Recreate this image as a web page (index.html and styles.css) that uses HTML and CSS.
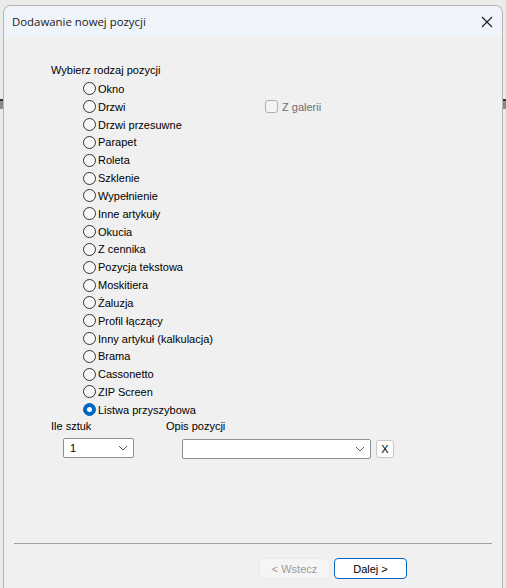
FILE: index.html
```html
<!DOCTYPE html>
<html>
<head>
    <title>Dodawanie nowej pozycji</title>
    <link rel="stylesheet" href="styles.css">
</head>
<body>
    <div class="behind behind-left"></div>
    <div class="behind behind-right"></div>
    <div class="window">
        <div class="titlebar">
            <span class="title">Dodawanie nowej pozycji</span>
            <svg class="close" width="12" height="12" viewBox="0 0 12 12">
                <path d="M1 1 L11 11 M11 1 L1 11" stroke="#1a1a1a" stroke-width="1.1" fill="none"/>
            </svg>
        </div>
        <div class="content">
            <div class="group-label">Wybierz rodzaj pozycji</div>
            <div class="options">
                <label class="row"><span class="opt"><span class="radio"></span>Okno</span></label>
                <label class="row"><span class="opt"><span class="radio"></span>Drzwi</span>
                    <span class="check-wrap"><span class="check"></span>Z galerii</span></label>
                <label class="row"><span class="opt"><span class="radio"></span>Drzwi przesuwne</span></label>
                <label class="row"><span class="opt"><span class="radio"></span>Parapet</span></label>
                <label class="row"><span class="opt"><span class="radio"></span>Roleta</span></label>
                <label class="row"><span class="opt"><span class="radio"></span>Szklenie</span></label>
                <label class="row"><span class="opt"><span class="radio"></span>Wypełnienie</span></label>
                <label class="row"><span class="opt"><span class="radio"></span>Inne artykuły</span></label>
                <label class="row"><span class="opt"><span class="radio"></span>Okucia</span></label>
                <label class="row"><span class="opt"><span class="radio"></span>Z cennika</span></label>
                <label class="row"><span class="opt"><span class="radio"></span>Pozycja tekstowa</span></label>
                <label class="row"><span class="opt"><span class="radio"></span>Moskitiera</span></label>
                <label class="row"><span class="opt"><span class="radio"></span>Żaluzja</span></label>
                <label class="row"><span class="opt"><span class="radio"></span>Profil łączący</span></label>
                <label class="row"><span class="opt"><span class="radio"></span>Inny artykuł (kalkulacja)</span></label>
                <label class="row"><span class="opt"><span class="radio"></span>Brama</span></label>
                <label class="row"><span class="opt"><span class="radio"></span>Cassonetto</span></label>
                <label class="row"><span class="opt"><span class="radio"></span>ZIP Screen</span></label>
                <label class="row"><span class="opt"><span class="radio checked"></span>Listwa przyszybowa</span></label>
            </div>
            <div class="fields">
                <div class="field qty">
                    <div class="field-label">Ile sztuk</div>
                    <div class="combo combo-qty">
                        <span>1</span>
                        <svg width="10" height="6" viewBox="0 0 10 6"><path d="M1 1 L5 5 L9 1" stroke="#555" fill="none"/></svg>
                    </div>
                </div>
                <div class="field desc">
                    <div class="field-label">Opis pozycji</div>
                    <div class="desc-row">
                        <div class="combo combo-desc">
                            <span></span>
                            <svg width="10" height="6" viewBox="0 0 10 6"><path d="M1 1 L5 5 L9 1" stroke="#555" fill="none"/></svg>
                        </div>
                        <button class="clear">X</button>
                    </div>
                </div>
            </div>
        </div>
        <div class="footer">
            <div class="separator"></div>
            <div class="buttons">
                <button class="btn" disabled>&lt; Wstecz</button>
                <button class="btn primary">Dalej &gt;</button>
            </div>
        </div>
    </div>
</body>
</html>
```

FILE: styles.css
```css
body { margin: 0; background: #ebebeb; font-family: "Liberation Sans", Arial, sans-serif; font-size: 11px; color: #000; height: 588px; overflow: hidden; position: relative; }

/* bits of the app window sticking out behind the dialog */
.behind { position: absolute; top: 99px; width: 4px; height: 8px; border-top: 2px solid #333; background: #8a8a8a; }
.behind-left { left: 0; }
.behind-right { right: 0; }

.window {
    position: relative; margin: 5px 3px 0 3px; height: 600px;
    background: #f0f0f0; border: 1px solid #b4b4b4; border-bottom: none;
    border-radius: 8px 8px 0 0; overflow: hidden;
}
.titlebar {
    height: 30px; background: #eef4fa; display: flex; align-items: center;
    justify-content: space-between; padding: 0 9px 0 8px;
}
.title { font-family: "Open Sans", "Noto Sans", sans-serif; font-size: 11.4px; color: #1a1a1a; }
.close { margin-top: 1px; }

.content { padding: 25px 0 0 47px; height: 481px; }
.group-label { line-height: 18px; }
.options { padding: 1px 0 0 32px; }
.row { display: flex; align-items: center; height: 17.83px; }
.opt { display: flex; align-items: center; width: 182px; }
.radio {
    width: 11px; height: 11px; border: 1px solid #333; border-radius: 50%;
    background: #f7f7f7; margin-right: 2px; box-sizing: content-box; position: relative;
}
.radio.checked { background: #0067c0; border-color: #0067c0; }
.radio.checked::after {
    content: ""; position: absolute; left: 3px; top: 3px; width: 5px; height: 5px;
    border-radius: 50%; background: #fff;
}
.check-wrap { display: flex; align-items: center; color: #6d6d6d; }
.check { width: 11px; height: 11px; border: 1px solid #b0b0b0; border-radius: 3px; background: #f4f4f4; margin-right: 4px; }

.fields { display: flex; margin-top: -1px; }
.field-label { line-height: 16px; }
.qty { width: 115px; }
.combo {
    display: flex; align-items: center; justify-content: space-between;
    height: 18px; border: 1px solid #8f8f8f; background: #fff; border-radius: 2px;
    padding: 0 5px 0 6px; box-sizing: content-box;
}
.combo-qty { width: 58px; margin: 4px 0 0 12px; }
.combo-desc { width: 176px; }
.desc-row { display: flex; align-items: center; margin: 5px 0 0 16px; }
.clear {
    margin-left: 5px; width: 18px; height: 18px; padding: 0; border: 1px solid #c8c8c8;
    background: #fdfdfd; border-radius: 3px; font-family: "Liberation Sans", Arial, sans-serif; font-size: 11px;
}

.footer { padding: 0 10px; }
.separator { height: 1px; background: #a0a0a0; margin-top: 1px; }
.buttons { display: flex; justify-content: flex-end; gap: 4px; padding: 14px 85px 0 0; }
.btn {
    width: 71px; height: 21px; font-family: "Liberation Sans", Arial, sans-serif; font-size: 11px;
    border: 1px solid #d8d8d8; border-radius: 4px; background: #fdfdfd; color: #000; padding: 0;
}
.btn:disabled { background: #f5f5f5; border-color: #ececec; color: #9a9a9a; }
.btn.primary { width: 73px; border: 1px solid #0067c0; background: #fff; }
```
